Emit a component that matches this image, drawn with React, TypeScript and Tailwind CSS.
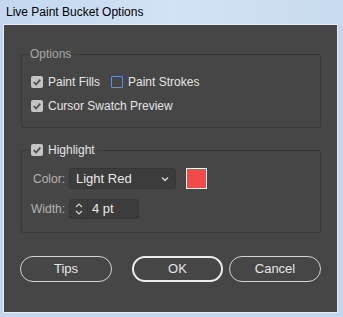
import React from "react";

const Box = ({ checked }: { checked: boolean }) =>
  checked ? (
    <span className="w-[12px] h-[12px] bg-[#c4c4c4] rounded-[2px] flex items-center justify-center shrink-0">
      <svg width="10" height="10" viewBox="0 0 10 10">
        <path d="M1.8 5.2 L4.1 7.5 L8.3 2.6" stroke="#4c4c4c" strokeWidth="1.7" fill="none" />
      </svg>
    </span>
  ) : (
    <span className="w-[12px] h-[12px] border border-[#5a93d6] rounded-[1px] shrink-0" />
  );

const Chk = ({ checked, label }: { checked: boolean; label: string }) => (
  <span className="flex items-center gap-[5px] h-[14px]">
    <Box checked={checked} />
    <span className="text-[#e4e4e4]">{label}</span>
  </span>
);

export default function App() {
  return (
    <div
      className="w-[343px] h-[317px] bg-[#c2d6ee] flex flex-col text-[12px] leading-[14px]"
      style={{ fontFamily: '"Liberation Sans", Arial, sans-serif' }}
    >
      <div className="h-[24px] shrink-0 px-[6px] flex items-center text-black bg-gradient-to-r from-[#c3d7ef] via-[#d3e2f4] to-[#c9dbf0]">
        Live Paint Bucket Options
      </div>
      <div className="ml-[3px] w-[335px] h-[289px] border border-[#e6eef8] bg-[#464646]">
        <div className="pl-[17px] pt-[22px] w-[317px]">
          <fieldset className="border border-[#393939] rounded-[2px] px-[9px] pt-[14px] pb-[14px] flex flex-col">
            <legend className="-ml-[3px] px-[2px] text-[#a8a8a8]">Options</legend>
            <div className="flex flex-col gap-[10px]">
              <div className="flex items-center gap-[11px]">
                <Chk checked label="Paint Fills" />
                <Chk checked={false} label="Paint Strokes" />
              </div>
              <Chk checked label="Cursor Swatch Preview" />
            </div>
          </fieldset>
          <fieldset className="mt-[15px] border border-[#393939] rounded-[2px] pl-[9px] pt-[11px] pb-[13px]">
            <legend className="-ml-[2px] px-[2px]">
              <Chk checked label="Highlight" />
            </legend>
            <div className="flex flex-col gap-[10px]">
              <div className="flex items-center">
                <span className="w-[34px] text-right text-[#b4b4b4]">Color:</span>
                <div className="ml-[4px] w-[107px] h-[21px] bg-[#3c3c3c] border border-[#363636] rounded-[3px] flex items-center justify-between pl-[6px] pr-[6px] text-[#e8e8e8] text-[13px]">
                  <span>Light Red</span>
                  <svg width="8" height="6" viewBox="0 0 8 6">
                    <path d="M1 1.5 L4 4.5 L7 1.5" stroke="#dcdcdc" strokeWidth="1.3" fill="none" />
                  </svg>
                </div>
                <div className="ml-[10px] w-[21px] h-[21px] bg-[#f04a4a] border border-[#f4f4f4]" />
              </div>
              <div className="flex items-center">
                <span className="w-[34px] text-right text-[#b4b4b4]">Width:</span>
                <div className="ml-[4px] h-[20px] flex bg-[#3c3c3c] border border-[#363636] rounded-[3px]">
                  <div className="w-[18px] flex flex-col items-center justify-center gap-[2px] border-r border-[#363636]">
                    <svg width="8" height="5" viewBox="0 0 8 5">
                      <path d="M1 4 L4 1 L7 4" stroke="#d4d4d4" strokeWidth="1.2" fill="none" />
                    </svg>
                    <svg width="8" height="5" viewBox="0 0 8 5">
                      <path d="M1 1 L4 4 L7 1" stroke="#d4d4d4" strokeWidth="1.2" fill="none" />
                    </svg>
                  </div>
                  <div className="w-[50px] flex items-center pl-[4px] text-[#e8e8e8] text-[13px]">4 pt</div>
                </div>
              </div>
            </div>
          </fieldset>
        </div>
        <div className="mt-[23px] pl-[16px] flex items-center text-[#e6e6e6] text-[13px]">
          <button className="w-[92px] h-[26px] rounded-full border-[1.5px] border-[#d4d4d4]">Tips</button>
          <button className="ml-[20px] w-[91px] h-[26px] rounded-full border-2 border-[#ececec]">OK</button>
          <button className="ml-[6px] w-[92px] h-[26px] rounded-full border-[1.5px] border-[#d4d4d4]">Cancel</button>
        </div>
      </div>
    </div>
  );
}
